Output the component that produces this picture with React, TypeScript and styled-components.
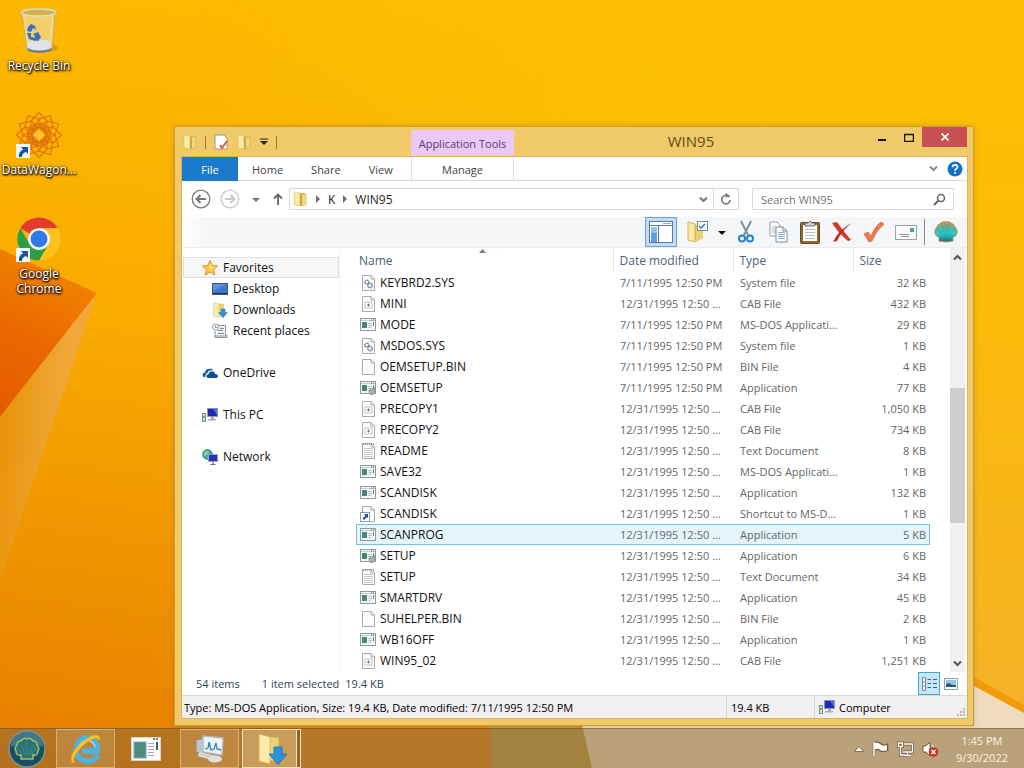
import React, { useState } from 'react';
import styled, { createGlobalStyle } from 'styled-components';

const GlobalStyle = createGlobalStyle`
  * {
    box-sizing: border-box;
  }

  body {
    margin: 0;
    font-family: 'Open Sans', 'Noto Sans', sans-serif;
    font-size: 11px;
    line-height: 15px;
    color: #1e1e1e;
  }

  button, input {
    font: inherit;
    color: inherit;
    margin: 0;
    padding: 0;
    border: 0;
    background: none;
  }

  a {
    color: inherit;
    text-decoration: none;
  }

  svg {
    display: block;
    flex: none;
  }
`;

const DesktopScreen = styled.div`
  position: relative;
  display: flex;
  flex-direction: column;
  min-height: 100vh;
  overflow: hidden;
  background: #f9b000;
`;

const WallpaperSvg = styled.svg`
  position: absolute;
  inset: 0;
  width: 100%;
  height: 100%;
`;

const DesktopArea = styled.main`
  flex: 1;
`;

const DesktopIcons = styled.nav`
  position: relative;
  display: flex;
  flex-direction: column;
  width: 78px;
  padding-top: 7px;
`;

const DesktopIcon = styled.a`
  display: flex;
  flex-direction: column;
  align-items: center;
  gap: 3px;
  min-height: 104px;
  font-size: 12px;
  color: #fff;
  text-align: center;
  text-shadow: 0 1px 2px #000, 1px 1px 2px #000, 0 0 3px rgba(0, 0, 0, 0.7);
`;

// Window frame

const WindowFrame = styled.section`
  position: absolute;
  left: 174px;
  right: 50px;
  top: 126px;
  bottom: 42px;
  display: flex;
  flex-direction: column;
  padding: 0 6px 7px 7px;
  background: #f0c969;
  border: 1px solid #cb9a3c;
  box-shadow: 0 0 4px rgba(120, 70, 0, 0.3);
`;

const TitleBar = styled.header`
  display: flex;
  height: 30px;
  flex: none;
`;

const QuickAccess = styled.div`
  display: flex;
  align-items: center;
  width: 229px;
  gap: 7px;
`;

const QuickButton = styled.button<{ $slim?: boolean }>`
  display: flex;
  width: ${props => props.$slim ? '10px' : '16px'};
  justify-content: center;
`;

const QuickDivider = styled.span`
  width: 1px;
  height: 13px;
  background: #a07a30;
`;

const ContextLabel = styled.div`
  display: flex;
  align-items: center;
  justify-content: center;
  width: 103px;
  margin-top: 3px;
  background: #ecc8f7;
  color: #5c3a6e;
`;

const WindowTitle = styled.h1`
  flex: 1;
  margin: 0;
  text-align: center;
  font-size: 15px;
  line-height: 29px;
  font-weight: 400;
  color: #65491a;
`;

const CaptionButtons = styled.div`
  display: flex;
  align-items: flex-start;
`;

const CaptionButton = styled.button<{ $close?: boolean }>`
  display: flex;
  align-items: center;
  justify-content: center;
  width: ${props => props.$close ? '45px' : '27px'};
  height: 20px;
  background: ${props => props.$close ? '#c75050' : 'transparent'};
`;

const Client = styled.div`
  flex: 1;
  min-height: 0;
  display: flex;
  flex-direction: column;
  background: #fff;
  box-shadow: 0 0 0 1px #dcb35a;
`;

const RibbonTabs = styled.div`
  display: flex;
  height: 24px;
  flex: none;
  border-bottom: 1px solid #dadbdc;
`;

const TabGroup = styled.div`
  display: flex;
  width: 229px;
`;

const RibbonTab = styled.button<{ $file?: boolean }>`
  padding: 0 14px;
  width: ${props => props.$file ? '56px' : 'auto'};
  height: 24px;
  background: ${props => props.$file ? '#1979ca' : 'transparent'};
  color: ${props => props.$file ? '#fff' : '#444'};
`;

const ContextTab = styled.button`
  width: 103px;
  height: 24px;
  border: solid #e3dbe6;
  border-width: 0 1px;
  color: #444;
`;

const RibbonEnd = styled.div`
  display: flex;
  flex: 1;
  align-items: center;
  justify-content: flex-end;
  gap: 9px;
  padding-right: 4px;
`;

const NavBar = styled.div`
  display: flex;
  align-items: center;
  gap: 1px;
  height: 36px;
  flex: none;
  padding: 0 13px 0 5px;
`;

const NavButton = styled.button<{ $narrow?: boolean }>`
  display: flex;
  align-items: center;
  justify-content: center;
  width: ${props => props.$narrow ? '21px' : '28px'};
  height: 24px;
`;

const AddressBar = styled.div`
  display: flex;
  flex: 1;
  align-items: center;
  height: 22px;
  margin-right: 12px;
  padding-left: 2px;
  border: 1px solid #d9d9d9;
  font-size: 12px;
`;

const Crumb = styled.button`
  padding: 0 8px;
`;

const CrumbArrow = styled.span`
  width: 0;
  height: 0;
  border: 4px solid transparent;
  border-left-color: #6d6d6d;
  border-right-width: 0;
  &:first-of-type {
    margin-left: 8px;
  }
`;

const AddressAction = styled.button<{ $line?: boolean }>`
  display: flex;
  align-items: center;
  justify-content: center;
  width: ${props => props.$line ? '25px' : '20px'};
  height: 20px;
  margin-left: ${props => props.$line ? '0' : 'auto'};
  border-left: ${props => props.$line ? '1px solid #d9d9d9' : '0'};
`;

const SearchBox = styled.label`
  display: flex;
  align-items: center;
  width: 202px;
  height: 22px;
  padding: 0 7px 0 8px;
  border: 1px solid #d9d9d9;
`;

const SearchInput = styled.input`
  flex: 1;
  min-width: 0;
  outline: none;
  font-size: 11px;
  &::placeholder {
    color: #757575;
    opacity: 1;
  }
`;

const Toolbar = styled.div`
  display: flex;
  align-items: center;
  justify-content: flex-end;
  height: 31px;
  flex: none;
  padding-right: 5px;
  background: linear-gradient(90deg, #fff, #f5f6f7 3%);
  border-bottom: 1px solid #ececec;
`;

const ToolButton = styled.button<{ $active?: boolean; $slim?: boolean }>`
  display: flex;
  align-items: center;
  justify-content: center;
  width: ${props => props.$slim ? '16px' : '32px'};
  height: 30px;
  margin-right: ${props => props.$active ? '5px' : '0'};
  border: ${props => props.$active ? '1px solid #6c9fd8' : '0'};
  background: ${props => props.$active ? '#c3dcf5' : 'transparent'};
`;

const ToolDivider = styled.span`
  width: 1px;
  height: 26px;
  margin: 0 5px 0 2px;
  background: #8a8a8a;
`;

// Navigation pane and file list

const Body = styled.div`
  display: flex;
  flex: 1;
  min-height: 0;
  overflow: hidden;
`;

const SideNav = styled.nav`
  width: 158px;
  flex: none;
  padding: 9px 0 0 1px;
  border-right: 1px solid #f5f5f5;
`;

const SideGroup = styled.div`
  margin-bottom: 21px;
`;

const SideLink = styled.a<{ $child?: boolean; $active?: boolean }>`
  display: flex;
  align-items: center;
  gap: 5px;
  height: 21px;
  padding-left: ${props => props.$child ? '28px' : '18px'};
  border: 1px solid ${props => props.$active ? '#dedede' : 'transparent'};
  background: ${props => props.$active ? '#f7f7f7' : 'transparent'};
  font-size: 12px;
  color: #111;
`;

const FilePane = styled.div`
  flex: 1;
  min-width: 0;
  overflow: hidden;
  padding: 0 20px 0 16px;
`;

const FileTable = styled.table`
  width: 100%;
  table-layout: fixed;
  border-collapse: collapse;
`;

const HeadCell = styled.th<{ $width?: number }>`
  position: relative;
  width: ${props => props.$width ? `${props.$width}px` : 'auto'};
  height: 24px;
  padding: 0 0 0 ${props => props.$width ? '6px' : '3px'};
  border-left: ${props => props.$width ? '1px solid #e5e5e5' : '0'};
  text-align: left;
  font-size: 12px;
  font-weight: 400;
  color: #4c607a;
`;

const SortMark = styled.svg`
  position: absolute;
  top: 1px;
  left: 48%;
`;

const FileRow = styled.tr<{ $selected?: boolean }>`
  height: 21px;
  background: ${props => props.$selected ? '#e5f3fb' : 'transparent'};
  outline: ${props => props.$selected ? '1px solid #7ac0e2' : 'none'};
  outline-offset: -1px;
`;

const Cell = styled.td<{ $right?: boolean }>`
  height: 21px;
  padding: 0 ${props => props.$right ? '4px' : '0'} 0 7px;
  color: #666;
  text-align: ${props => props.$right ? 'right' : 'left'};
  white-space: nowrap;
`;

const NameCell = styled(Cell)`
  padding-left: 4px;
`;

const FileName = styled.span`
  display: flex;
  align-items: center;
  gap: 4px;
  font-size: 12px;
  color: #111;
`;

const ScrollColumn = styled.div`
  display: grid;
  grid-template-rows: 18px 122fr 135fr 132fr 17px;
  width: 15px;
  margin-right: 2px;
  background: #f0f0f0;
`;

const ScrollArrow = styled.button<{ $row: number }>`
  grid-row: ${props => props.$row};
  display: flex;
  align-items: center;
  justify-content: center;
`;

const ScrollThumb = styled.div`
  grid-row: 3;
  background: #cdcdcd;
`;

const DetailsLine = styled.div`
  display: flex;
  align-items: center;
  height: 23px;
  flex: none;
  padding: 0 5px 0 14px;
  color: #33415c;
`;

const DetailsText = styled.span<{ $gap: number }>`
  margin-right: ${props => props.$gap}px;
`;

const ViewButtons = styled.div`
  display: flex;
  margin-left: auto;
`;

const ViewButton = styled.button<{ $active?: boolean }>`
  display: flex;
  align-items: center;
  justify-content: center;
  width: 22px;
  height: 23px;
  border: 1px solid ${props => props.$active ? '#4ba5cf' : 'transparent'};
  background: ${props => props.$active ? '#c4e8f8' : 'transparent'};
`;

const StatusBar = styled.footer`
  display: flex;
  height: 23px;
  flex: none;
  background: #f0f0f0;
  border-top: 1px solid #d9d9d9;
  color: #000;
`;

const StatusCell = styled.div<{ $width?: number }>`
  display: flex;
  align-items: center;
  gap: 4px;
  flex: ${props => props.$width ? `0 0 ${props.$width}px` : '1'};
  padding-left: ${props => props.$width ? '4px' : '2px'};
  border-left: ${props => props.$width ? '1px solid #d7d7d7' : '0'};
  white-space: nowrap;
`;

const Grip = styled.svg`
  align-self: flex-end;
  margin: 0 2px 2px auto;
`;

// Taskbar

const Taskbar = styled.footer`
  position: relative;
  display: flex;
  align-items: center;
  height: 40px;
  padding: 0 16px 0 8px;
  border-top: 1px solid rgba(110, 75, 20, 0.5);
  background: rgba(130, 102, 60, 0.5);
`;

const StartButton = styled.button`
  margin-right: 10px;
`;

const TaskButton = styled.button<{ $state?: 'open' | 'active' }>`
  display: flex;
  align-items: center;
  justify-content: center;
  width: 59px;
  height: 39px;
  margin-right: 3px;
  padding-right: ${props => props.$state ? '0' : '4px'};
  border: 1px solid ${props => props.$state === 'active' ? '#f5dfb4' : props.$state ? '#dcb274' : 'transparent'};
  background: ${props => props.$state === 'active' ? 'rgba(214, 180, 125, 0.6)' : props.$state ? 'rgba(206, 160, 104, 0.4)' : 'transparent'};
  box-shadow: ${props => props.$state === 'active' ? 'inset -4px 0 0 -1px #8d642c, inset -5px 0 0 -1px #f5dfb4' : 'none'};
`;

const Tray = styled.div`
  display: flex;
  align-items: center;
  gap: 8px;
  margin-left: auto;
`;

const TrayButton = styled.button``;

const Clock = styled.time`
  margin-left: 9px;
  line-height: 17px;
  text-align: center;
  color: #fff4de;
`;

// Icons

const Wallpaper: React.FC = () => (
  <WallpaperSvg viewBox="0 0 1024 768" preserveAspectRatio="none" aria-hidden="true">
    <defs>
      <linearGradient id="sky" x1="0.35" y1="0" x2="0.15" y2="1">
        <stop offset="0" stopColor="#fdbb00" />
        <stop offset="0.45" stopColor="#f9ab00" />
        <stop offset="1" stopColor="#e77f00" />
      </linearGradient>
      <linearGradient id="skyRight" x1="0" y1="0" x2="0" y2="1">
        <stop offset="0" stopColor="#fdc000" />
        <stop offset="0.4" stopColor="#fabb08" />
        <stop offset="1" stopColor="#f5b02c" />
      </linearGradient>
      <linearGradient id="fade" x1="0" y1="0" x2="1" y2="0">
        <stop offset="0" stopColor="#fff" stopOpacity="0" />
        <stop offset="0.55" stopColor="#fff" />
      </linearGradient>
      <mask id="rightMask">
        <rect x="200" width="824" height="768" fill="url(#fade)" />
      </mask>
      <linearGradient id="fold" x1="0.3" y1="0" x2="0" y2="1">
        <stop offset="0" stopColor="#f28200" />
        <stop offset="0.5" stopColor="#e96800" />
        <stop offset="1" stopColor="#e45a00" />
      </linearGradient>
      <linearGradient id="ray" x1="0" y1="0.5" x2="0.6" y2="0.65">
        <stop offset="0" stopColor="#e89408" />
        <stop offset="1" stopColor="#f0a83a" />
      </linearGradient>
    </defs>
    <rect width="1024" height="768" fill="url(#sky)" />
    <rect width="1024" height="768" fill="url(#skyRight)" mask="url(#rightMask)" />
    <path d="M0 249 L97 293 L0 417 Z" fill="url(#fold)" />
    <path d="M97 293 L0 417 V580 Z" fill="url(#ray)" />
    <path d="M200 724 H490 V768 H200 Z" fill="#e68a14" />
    <path d="M490 724 H582 L592 768 H490 Z" fill="#c59d40" />
    <path d="M582 724 L800 600 L974 682 L1024 712 V768 H592 Z" fill="#f0dcbc" />
    <path d="M974 677 L1024 705 V713 L974 686 Z" fill="#f09c08" />
  </WallpaperSvg>
);

const RecycleBin: React.FC = () => (
  <svg width="48" height="48" viewBox="0 0 48 48">
    <ellipse cx="32" cy="41" rx="11" ry="4" fill="#a06a00" opacity="0.35" />
    <path d="M7 6 L12 43 Q24 48 37 43 L40 6 Z" fill="#f3dc96" opacity="0.9" stroke="#b8ab8a" />
    <path d="M10 8 L14 36 Q24 40 34 36 L37 8 Z" fill="#f2c548" opacity="0.45" />
    <path d="M12 36 Q17 31 22 35 Q28 30 36 36 L35 42 Q24 46 13 42 Z" fill="#dfe3ec" />
    <path d="M12 41 Q24 46 37 41 L36 44 Q24 48 13 44 Z" fill="#7c7f78" />
    <ellipse cx="23.500" cy="5.500" rx="17" ry="3.500" fill="#d3b04a" stroke="#ddd9d0" strokeWidth="1.500" />
    <g fill="#396fc4">
      <path d="M13 20 L16 17 L20 19 L21 23 L18 21 L16 25 L12 24 Z" />
      <path d="M12 26 L16 26 L16 30 L21 31 L20 34 L14 32 Z" />
      <path d="M18 27 L23 25 L26 30 L23 34 L19 33 L20 29 Z" />
    </g>
  </svg>
);

const ShortcutArrow: React.FC = () => (
  <g transform="translate(1 33)">
    <rect width="14" height="14" fill="#f5f8fb" />
    <path d="M5 3 H12 V10 L10 8 Q6 9 6 13 L3 13 Q2 8 7 5.500 Z" fill="#1a559c" />
  </g>
);

const DataWagon: React.FC = () => (
  <svg width="48" height="48" viewBox="0 0 48 48">
    <g fill="none" stroke="#e0740f" strokeWidth="1.200" strokeLinejoin="round">
      {[0, 30, 60, 90, 120, 150, 180, 210, 240, 270, 300, 330].map(angle => (
        <path key={angle} transform={`rotate(${angle} 24 24)`} d="M20 14 L16 10 L24 1.500 L32 10 L20 18" />
      ))}
      {[15, 45, 75, 105, 135, 165].map(angle => (
        <ellipse key={angle} transform={`rotate(${angle} 24 24)`} cx="24" cy="24" rx="12" ry="6" />
      ))}
    </g>
    <path d="M24 17 L26 22 L31 24 L26 26 L24 31 L22 26 L17 24 L22 22 Z" fill="#ffc63c" />
    <ShortcutArrow />
  </svg>
);

const Chrome: React.FC = () => (
  <svg width="48" height="48" viewBox="0 0 48 48">
    <path d="M24 24 L5.400 13.200 A21.500 21.500 0 0 1 42.600 13.200 L24 13.200 Z" fill="#e33b2e" />
    <path d="M24 24 L24 13.200 H42.600 A21.500 21.500 0 0 1 24 45.500 L33.400 29.400 Z" fill="#fcc31e" />
    <path d="M24 24 L33.400 29.400 L24 45.500 A21.500 21.500 0 0 1 5.400 13.200 L14.700 29.400 Z" fill="#2b9f47" />
    <circle cx="24" cy="24" r="10.800" fill="#fff" />
    <circle cx="24" cy="24" r="8.500" fill="#3479ea" />
    <ShortcutArrow />
  </svg>
);

const FolderIcon: React.FC = () => (
  <svg width="16" height="16" viewBox="0 0 16 16">
    <path d="M7 2 H13 V14 H6 Z" fill="#e2bf55" />
    <path d="M9 3 H14 V14 L9 15 Z" fill="#f0d77e" stroke="#c9a544" strokeWidth="0.500" />
    <path d="M2 1 L8 2 V15 L2 14 Z" fill="#f9eaa6" stroke="#d4b454" strokeWidth="0.500" />
    <path d="M8 2 V15 L10 14 V4 Z" fill="#cfa63b" />
  </svg>
);

const CheckedPage: React.FC = () => (
  <svg width="16" height="16" viewBox="0 0 16 16">
    <path d="M2 1 H11 L14 4 V15 H2 Z" fill="#fdfdfd" stroke="#9a9a9a" />
    <path d="M7 11 L9 14 L14 7" fill="none" stroke="#e05c4c" strokeWidth="2" />
  </svg>
);

const DownChevron: React.FC<{ color?: string; up?: boolean }> = ({ color = '#555', up }) => (
  <svg width="9" height="7" viewBox="0 0 9 7">
    <path d={up ? 'M1 5.500 L4.500 2 L8 5.500' : 'M1 1.500 L4.500 5 L8 1.500'} fill="none" stroke={color} strokeWidth="2" />
  </svg>
);

const Caret: React.FC<{ bar?: boolean; color?: string }> = ({ bar, color = '#222' }) => (
  <svg width="8" height="8" viewBox="0 0 8 8">
    {bar && <path d="M0 1 H8" stroke={color} />}
    <path d="M0 3 H8 L4 7 Z" fill={color} />
  </svg>
);

const HelpIcon: React.FC = () => (
  <svg width="16" height="16" viewBox="0 0 16 16">
    <circle cx="8" cy="8" r="7.500" fill="#1271c8" />
    <path d="M5.500 6.200 Q5.500 3.800 8 3.800 Q10.500 3.800 10.500 6 Q10.500 7.300 9 8 Q8 8.500 8 9.800" fill="none" stroke="#fff" strokeWidth="1.700" />
    <rect x="7.100" y="11" width="1.800" height="1.800" fill="#fff" />
  </svg>
);

const RoundArrow: React.FC<{ color: string; forward?: boolean }> = ({ color, forward }) => (
  <svg width="20" height="20" viewBox="0 0 20 20">
    <circle cx="10" cy="10" r="8.800" fill="none" stroke={color} strokeWidth="1.300" />
    <path d={forward ? 'M5 10 H14 M10.500 6 L14.500 10 L10.500 14' : 'M15 10 H6 M9.500 6 L5.500 10 L9.500 14'} fill="none" stroke={color} strokeWidth="2" />
  </svg>
);

const UpArrow: React.FC = () => (
  <svg width="12" height="14" viewBox="0 0 12 14">
    <path d="M6 13 V3 M2 6.500 L6 2.500 L10 6.500" fill="none" stroke="#666" strokeWidth="1.800" />
  </svg>
);

const RefreshIcon: React.FC = () => (
  <svg width="12" height="12" viewBox="0 0 12 12">
    <path d="M9.500 4 A4.300 4.300 0 1 0 10.300 7" fill="none" stroke="#777" strokeWidth="1.600" />
    <path d="M5.500 0 L9.500 2.500 L5.500 5 Z" fill="#777" />
  </svg>
);

const SearchIcon: React.FC = () => (
  <svg width="13" height="13" viewBox="0 0 13 13">
    <circle cx="8" cy="5" r="3.500" fill="none" stroke="#666" strokeWidth="1.500" />
    <path d="M5.500 7.500 L1 12" stroke="#666" strokeWidth="2" />
  </svg>
);

const NavPaneIcon: React.FC = () => (
  <svg width="24" height="22" viewBox="0 0 24 22">
    <rect x="0.500" y="0.500" width="23" height="21" fill="#fff" stroke="#5d7a9c" />
    <path d="M1 4.500 H23" stroke="#5d7a9c" />
    <rect x="2" y="6" width="6" height="15" fill="#8cc2ef" />
    <rect x="2" y="12" width="6" height="9" fill="#5ba3e2" />
    <path d="M9.500 4 V21" stroke="#5d7a9c" />
    <path d="M14 2.500 H22" stroke="#8ea7c2" />
  </svg>
);

const FolderOptionsIcon: React.FC = () => (
  <svg width="22" height="24" viewBox="0 0 22 24">
    <path d="M6 5 H16 V18 L8 21 Z" fill="#dcb74e" />
    <path d="M1 2 L8 4 V22 L1 20 Z" fill="#f9e9a3" stroke="#d6b658" />
    <path d="M9 6 L16 5 V18 L9 22 Z" fill="#ecd073" />
    <rect x="10.500" y="1.500" width="10" height="9" fill="#f8fbfd" stroke="#7a8894" />
    <path d="M12 6 L14 8 L18 4" fill="none" stroke="#2c6dad" strokeWidth="1.300" />
  </svg>
);

const ScissorsIcon: React.FC = () => (
  <svg width="16" height="24" viewBox="0 0 16 24">
    <path d="M3 1 L10 15 M13 1 L6 15" stroke="#7d929f" strokeWidth="2" />
    <circle cx="4" cy="18.500" r="3" fill="none" stroke="#2684c6" strokeWidth="2" />
    <circle cx="12" cy="18.500" r="3" fill="none" stroke="#2684c6" strokeWidth="2" />
  </svg>
);

const CopyIcon: React.FC = () => (
  <svg width="19" height="22" viewBox="0 0 19 22">
    <path d="M1 1 H8 L11 4 V15 H1 Z" fill="#fff" stroke="#8e9aa5" />
    <path d="M3 6 H7 M3 8 H7 M3 10 H7 M3 12 H7" stroke="#a9bccb" />
    <path d="M7 6 H14 L18 10 V21 H7 Z" fill="#fff" stroke="#7f8d9a" />
    <path d="M14 6 V10 H18" fill="none" stroke="#7f8d9a" />
    <path d="M9 11.500 H16 M9 13.500 H16 M9 15.500 H16 M9 17.500 H16" stroke="#8fb2cf" />
  </svg>
);

const PasteIcon: React.FC = () => (
  <svg width="20" height="24" viewBox="0 0 20 24">
    <rect x="0.500" y="2.500" width="19" height="21" rx="1" fill="#94652a" stroke="#6b481d" />
    <path d="M3 5 H17 V21 H3 Z" fill="#fff" />
    <path d="M5 9.500 H15 M5 12.500 H15 M5 15.500 H15 M5 18.500 H15" stroke="#b4bfc9" />
    <path d="M5 3 H8 L10 1 L12 3 H15 V6 H5 Z" fill="#cfd3d5" stroke="#555" strokeWidth="0.800" />
  </svg>
);

const DeleteIcon: React.FC = () => (
  <svg width="22" height="22" viewBox="0 0 22 22">
    <path d="M1 2 L6 1 Q10 7 20 19 L17 20 Q8 13 1 2 Z" fill="#d03b2a" />
    <path d="M21 2 Q11 9 6 20 L2 21 Q8 8 21 2 Z" fill="#c02f22" />
  </svg>
);

const TickIcon: React.FC = () => (
  <svg width="22" height="22" viewBox="0 0 22 22">
    <path d="M1 13 L5 11 L8 15 Q13 4 18 1 L21 3 Q13 10 9 20 L6 21 Z" fill="#ee7a4c" stroke="#d8653b" strokeWidth="0.700" />
  </svg>
);

const MailIcon: React.FC = () => (
  <svg width="22" height="15" viewBox="0 0 22 15">
    <rect x="0.500" y="0.500" width="21" height="14" fill="#fbfbfb" stroke="#9aa3aa" />
    <rect x="15" y="3" width="4" height="4" fill="#43a996" />
    <path d="M4 9.500 H14 M6 11.500 H14" stroke="#8a9199" />
  </svg>
);

const ShellIcon: React.FC = () => (
  <svg width="24" height="22" viewBox="0 0 24 22">
    <defs>
      <linearGradient id="shell" x1="0" y1="0" x2="0" y2="1">
        <stop offset="0" stopColor="#d98a4c" />
        <stop offset="0.350" stopColor="#4fb9a8" />
        <stop offset="0.600" stopColor="#28cbd2" />
        <stop offset="1" stopColor="#0f6e72" />
      </linearGradient>
    </defs>
    <path d="M12 1 Q15 0 17 2 Q20 3 21 6 Q24 9 23 12 Q23 15 19 16 V20 Q12 22 5 20 V16 Q1 15 1 12 Q0 9 3 6 Q4 3 7 2 Q9 0 12 1 Z" fill="url(#shell)" stroke="#bb8c55" />
    <path d="M12 15 V3 M11 15 L8 4 M13 15 L16 4 M9 15 L4 8 M15 15 L20 8" stroke="#2a9c9c" strokeWidth="0.500" />
  </svg>
);

const StarIcon: React.FC = () => (
  <svg width="16" height="16" viewBox="0 0 16 16">
    <path d="M8 0.500 L10.200 5.500 L15.500 6 L11.500 9.500 L12.800 15 L8 12 L3.200 15 L4.500 9.500 L0.500 6 L5.800 5.500 Z" fill="#fdcb3c" stroke="#df8a35" />
    <path d="M8 3 L9.300 6.500 L12.500 7 L8 9 Z" fill="#fff0a4" />
  </svg>
);

const MonitorIcon: React.FC = () => (
  <svg width="16" height="16" viewBox="0 0 16 16">
    <rect x="0.500" y="2.500" width="15" height="11" fill="#3f77d0" stroke="#45566e" />
    <path d="M1 3 H15 L1 10 Z" fill="#6fa0e6" opacity="0.600" />
    <path d="M1 12.500 H15" stroke="#1e3352" />
  </svg>
);

const DownloadsIcon: React.FC<{ size?: number }> = ({ size = 16 }) => (
  <svg width={size} height={size} viewBox="0 0 16 16">
    <path d="M6 2 H11.500 V14 H6 Z" fill="#ecd278" stroke="#c8a546" strokeWidth="0.400" />
    <path d="M1.500 0.500 L7 2 V15.500 L1.500 14 Z" fill="#faebad" stroke="#d4b454" strokeWidth="0.400" />
    <path d="M9 7 H13 V10.500 H15.500 L11 15.800 L6.500 10.500 H9 Z" fill="#2b93dc" stroke="#1b6fae" strokeWidth="0.400" />
  </svg>
);

const RecentIcon: React.FC = () => (
  <svg width="16" height="16" viewBox="0 0 16 16">
    <path d="M5 2.500 H13.500 V12 H15 V14.500 H3 V8" fill="#f1f3f5" stroke="#8f969e" />
    <path d="M3 13 H15" stroke="#8f969e" />
    <path d="M8 5.500 H12 M6 7.500 H11 M6 10.500 H12" stroke="#7d8995" />
    <circle cx="3.500" cy="4" r="3" fill="#fff" stroke="#8f969e" />
    <path d="M3.500 2.500 V4.500 H5" fill="none" stroke="#666" strokeWidth="0.800" />
  </svg>
);

const CloudIcon: React.FC = () => (
  <svg width="16" height="16" viewBox="0 0 16 16">
    <path d="M1.500 12 Q-1 8 3 7.500 Q3.500 3.500 7.500 4 Q9.500 2.500 11 5 Q6 5 5.500 8 Q3 8.500 3.500 12 Z" fill="#1359a8" />
    <path d="M5.500 13 Q3 10 6.500 9 Q7.500 5.500 10.500 6.500 Q13 6.500 13 9 Q16 9 16 11.500 Q15.500 13 14 13 Z" fill="#0d4f9f" />
  </svg>
);

const ComputerIcon: React.FC<{ network?: boolean }> = ({ network }) => (
  <svg width="16" height="16" viewBox="0 0 16 16">
    {network ? (
      <>
        <circle cx="5.500" cy="5.500" r="5" fill="#39a4bd" stroke="#2d6f90" strokeWidth="0.600" />
        <path d="M2 3 Q5 1 7 3 L5 6 L2 7 Z M5 8 L8 7 L7 10 Z" fill="#8fd47a" />
        <rect x="6.500" y="5.500" width="9" height="7" fill="#2231b8" stroke="#9aa5b8" />
        <path d="M11 13 V15 M8.500 15.500 H13.500" stroke="#68717c" strokeWidth="1.200" />
      </>
    ) : (
      <>
        <rect x="0.500" y="6.500" width="3" height="8" fill="#d3dbd5" stroke="#7f8b84" />
        <rect x="1" y="9" width="1.500" height="2" fill="#4fae55" />
        <rect x="5.500" y="1.500" width="10" height="8" fill="#1d29b5" stroke="#8d98aa" />
        <path d="M11 2 H15 V8 Z" fill="#5566e6" />
        <path d="M9 10 H12 V12 H14 V13.500 H6 V12 H9 Z" fill="#a4acb6" />
      </>
    )}
  </svg>
);

type FileKind = 'sys' | 'cab' | 'app' | 'bin' | 'setup' | 'text' | 'link';

const AppWindowArt: React.FC = () => (
  <>
    <rect x="0.500" y="1.500" width="15" height="12" fill="#f2f6f6" stroke="#8f9ba1" />
    <path d="M1 3.500 H15" stroke="#c3cdd1" />
    <path d="M11 3 H12 M13 3 H14" stroke="#556" />
    <rect x="2" y="5" width="5" height="6" fill="#468676" />
    <path d="M8.500 6.500 H12 M8.500 8.500 H12 M8.500 10.500 H11" stroke="#b3bfc5" />
    <path d="M13.500 5 V9" stroke="#72858c" />
  </>
);

const FileIcon: React.FC<{ kind: FileKind }> = ({ kind }) => (
  <svg width="16" height="16" viewBox="0 0 16 16">
    {kind === 'app' || kind === 'setup' ? (
      <AppWindowArt />
    ) : (
      <path d="M2.500 0.500 H11 L14.500 4 V15.500 H2.500 Z M11 0.500 V4 H14.500" fill="#fdfdfd" stroke="#a0a0a0" strokeWidth="0.900" />
    )}
    {kind === 'setup' && (
      <path d="M9 12 Q9 8 12 9 L15 7 V12 Q14 15 11 15 Z" fill="#a4b3a9" stroke="#6f8277" strokeWidth="0.600" />
    )}
    {kind === 'sys' && (
      <g fill="none" stroke="#53718c" strokeWidth="1.400">
        <circle cx="6.800" cy="7" r="1.900" strokeDasharray="1.200 0.500" />
        <circle cx="10" cy="10.500" r="2.200" strokeDasharray="1.200 0.500" />
      </g>
    )}
    {kind === 'cab' && (
      <>
        <rect x="5" y="6" width="7" height="6" fill="none" stroke="#b5b5b5" strokeWidth="0.800" />
        <path d="M7 9 H10 M8.500 7.500 V10.500" stroke="#777" />
      </>
    )}
    {kind === 'text' && (
      <>
        <path d="M4 5.500 H13 M4 7.500 H13 M4 9.500 H13 M4 11.500 H13 M4 13.500 H13" stroke="#c8c8c8" />
        <path d="M3 1 H14" stroke="#999" strokeWidth="2" strokeDasharray="1 1" />
      </>
    )}
    {kind === 'link' && (
      <>
        <rect x="0.500" y="6.500" width="9" height="9" fill="#fff" stroke="#849eb7" />
        <path d="M4 8 H8 V12 L7 11 L4 14 L2.500 12.500 L5.500 9.500 Z" fill="#17549b" />
      </>
    )}
  </svg>
);

const StartOrb: React.FC = () => (
  <svg width="38" height="38" viewBox="0 0 38 38">
    <circle cx="19" cy="19" r="18" fill="#174e61" stroke="#819394" strokeWidth="1.500" />
    <path d="M3 17 A16 16 0 0 1 35 17 Q19 10 3 17 Z" fill="#5a94a0" opacity="0.600" />
    <path d="M13 29 V25 Q8 26 8 21 Q6 18 9 15 Q9 11 13 11 Q16 7 19 9 Q22 7 25 11 Q29 11 29 15 Q32 18 30 21 Q30 26 25 25 V29 Z" fill="#2a7275" stroke="#a7bd66" strokeWidth="1.500" />
    <path d="M19 25 V12 M17 25 L13 14 M21 25 L25 14 M15 25 L10 18 M23 25 L28 18" stroke="#4a8f86" strokeWidth="0.800" />
  </svg>
);

const ExplorerIcon: React.FC = () => (
  <svg width="34" height="32" viewBox="0 0 34 32">
    <path d="M29 22 Q25 29 17 28 Q6 26 7 16 Q9 5 18 5 Q29 6 28 18 H13" fill="none" stroke="#4cb4e2" strokeWidth="5.500" />
    <path d="M10 17 Q10 8 18 7.500 Q25 8 26 14" fill="none" stroke="#a3e0f7" strokeWidth="1.500" />
    <path d="M3 30 Q-1 22 12 10 Q25 -1 30 3 Q32 5 30 8 Q29 4 24 6 Q14 10 7 21 Q3 28 6 29 Z" fill="#fbc525" stroke="#dd9b13" strokeWidth="0.600" />
  </svg>
);

const ProgramIcon: React.FC = () => (
  <svg width="30" height="26" viewBox="0 0 30 26">
    <rect x="0.500" y="1.500" width="29" height="23" fill="#fafafa" stroke="#d5d5cf" />
    <path d="M22 3 H24 M25 3 H27" stroke="#555" strokeWidth="1.500" />
    <rect x="3" y="6" width="12" height="16" fill="#4a8f7c" stroke="#7da8bf" />
    <path d="M17 7.500 H23 M17 10.500 H23 M17 13.500 H23 M17 16.500 H23 M17 19.500 H23" stroke="#a9a9a9" />
    <path d="M26 6 V14" stroke="#41665e" strokeWidth="2" />
  </svg>
);

const TaskManagerIcon: React.FC = () => (
  <svg width="30" height="30" viewBox="0 0 30 30">
    <path d="M1 6 L10 4 V21 L1 18 Z" fill="#bfc5c3" stroke="#868b88" />
    <path d="M8 2 L28 4 L27 21 L8 18 Z" fill="#eef5f8" stroke="#b5bdc1" strokeWidth="1.500" />
    <path d="M10 15 L13 14 L14 8 L16 16 L19 15 L21 9 L22 15 L26 16" fill="none" stroke="#2d85b2" strokeWidth="1.300" />
    <path d="M4 19 L20 23 M3 21 L17 25" stroke="#dedede" strokeWidth="2" />
    <ellipse cx="20" cy="25" rx="7" ry="3.500" fill="#dfe1e1" />
  </svg>
);

const FlagIcon: React.FC = () => (
  <svg width="17" height="16" viewBox="0 0 17 16">
    <path d="M2 1 V15 M2.500 2 Q6 1 8 3 Q11 6 15 4 V9 Q11 11 8 9 Q6 7 2.500 8.500 Z" fill="#fff" stroke="#6e5a38" strokeWidth="2.500" />
    <path d="M2 1 V15 M2.500 2 Q6 1 8 3 Q11 6 15 4 V9 Q11 11 8 9 Q6 7 2.500 8.500 Z" fill="#fff" />
    <path d="M2 1 V15" stroke="#fff" strokeWidth="1.500" />
  </svg>
);

const NetworkTrayIcon: React.FC = () => (
  <svg width="17" height="16" viewBox="0 0 17 16">
    <g fill="none">
      <path d="M7 3 H15.500 V11 H6 M10.500 11 V14 M7 14.500 H14 M3.500 5 V14 H8 M1.500 2 H5.500 V5.500 H1.500 Z" stroke="#6e5a38" strokeWidth="3" />
      <path d="M7 3 H15.500 V11 H6 M10.500 11 V14 M7 14.500 H14 M3.500 5 V14 H8 M1.500 2 H5.500 V5.500 H1.500 Z" stroke="#fff" strokeWidth="1.400" />
    </g>
  </svg>
);

const MutedIcon: React.FC = () => (
  <svg width="17" height="16" viewBox="0 0 17 16">
    <path d="M1 5 H4 L8 1 V15 L4 11 H1 Z" fill="#fff" stroke="#6e5a38" />
    <path d="M10 4 Q12 5 12 8" fill="none" stroke="#fff" />
    <circle cx="11.500" cy="11" r="4.800" fill="#d02f26" />
    <path d="M9.500 9 L13.500 13 M13.500 9 L9.500 13" stroke="#fff" strokeWidth="1.600" />
  </svg>
);

interface FileEntry {
  name: string;
  date: string;
  type: string;
  size: string;
  kind: FileKind;
}

const JULY = '7/11/1995 12:50 PM';
const DECEMBER = '12/31/1995 12:50 ...';

const files: FileEntry[] = [
  { name: 'KEYBRD2.SYS', date: JULY, type: 'System file', size: '32 KB', kind: 'sys' },
  { name: 'MINI', date: DECEMBER, type: 'CAB File', size: '432 KB', kind: 'cab' },
  { name: 'MODE', date: JULY, type: 'MS-DOS Applicati...', size: '29 KB', kind: 'app' },
  { name: 'MSDOS.SYS', date: JULY, type: 'System file', size: '1 KB', kind: 'sys' },
  { name: 'OEMSETUP.BIN', date: JULY, type: 'BIN File', size: '4 KB', kind: 'bin' },
  { name: 'OEMSETUP', date: JULY, type: 'Application', size: '77 KB', kind: 'setup' },
  { name: 'PRECOPY1', date: DECEMBER, type: 'CAB File', size: '1,050 KB', kind: 'cab' },
  { name: 'PRECOPY2', date: DECEMBER, type: 'CAB File', size: '734 KB', kind: 'cab' },
  { name: 'README', date: DECEMBER, type: 'Text Document', size: '8 KB', kind: 'text' },
  { name: 'SAVE32', date: DECEMBER, type: 'MS-DOS Applicati...', size: '1 KB', kind: 'app' },
  { name: 'SCANDISK', date: DECEMBER, type: 'Application', size: '132 KB', kind: 'app' },
  { name: 'SCANDISK', date: DECEMBER, type: 'Shortcut to MS-D...', size: '1 KB', kind: 'link' },
  { name: 'SCANPROG', date: DECEMBER, type: 'Application', size: '5 KB', kind: 'app' },
  { name: 'SETUP', date: DECEMBER, type: 'Application', size: '6 KB', kind: 'setup' },
  { name: 'SETUP', date: DECEMBER, type: 'Text Document', size: '34 KB', kind: 'text' },
  { name: 'SMARTDRV', date: DECEMBER, type: 'Application', size: '45 KB', kind: 'app' },
  { name: 'SUHELPER.BIN', date: DECEMBER, type: 'BIN File', size: '2 KB', kind: 'bin' },
  { name: 'WB16OFF', date: DECEMBER, type: 'Application', size: '1 KB', kind: 'app' },
  { name: 'WIN95_02', date: DECEMBER, type: 'CAB File', size: '1,251 KB', kind: 'cab' },
];

const tools = [
  { label: 'Cut', icon: <ScissorsIcon /> },
  { label: 'Copy', icon: <CopyIcon /> },
  { label: 'Paste', icon: <PasteIcon /> },
  { label: 'Delete', icon: <DeleteIcon /> },
  { label: 'Properties', icon: <TickIcon /> },
  { label: 'E-mail', icon: <MailIcon /> },
];

const FileList: React.FC = () => {
  const [selected, setSelected] = useState(12);

  return (
    <FilePane>
      <FileTable>
        <thead>
          <tr>
            <HeadCell>
              Name
              <SortMark width="7" height="4" viewBox="0 0 7 4"><path d="M0 4 L3.500 0 L7 4 Z" fill="#6b7f96" /></SortMark>
            </HeadCell>
            <HeadCell $width={120}>Date modified</HeadCell>
            <HeadCell $width={120}>Type</HeadCell>
            <HeadCell $width={77}>Size</HeadCell>
          </tr>
        </thead>
        <tbody>
          {files.map((file, index) => (
            <FileRow key={index} $selected={index === selected} onClick={() => setSelected(index)}>
              <NameCell>
                <FileName><FileIcon kind={file.kind} />{file.name}</FileName>
              </NameCell>
              <Cell>{file.date}</Cell>
              <Cell>{file.type}</Cell>
              <Cell $right>{file.size}</Cell>
            </FileRow>
          ))}
        </tbody>
      </FileTable>
    </FilePane>
  );
};

const ExplorerWindow: React.FC = () => (
  <WindowFrame>
    <TitleBar>
      <QuickAccess>
        <QuickButton aria-label="Window menu"><FolderIcon /></QuickButton>
        <QuickDivider />
        <QuickButton aria-label="Properties"><CheckedPage /></QuickButton>
        <QuickButton aria-label="New folder"><FolderIcon /></QuickButton>
        <QuickButton $slim aria-label="Customize toolbar"><Caret bar /></QuickButton>
        <QuickDivider />
      </QuickAccess>
      <ContextLabel>Application Tools</ContextLabel>
      <WindowTitle>WIN95</WindowTitle>
      <CaptionButtons>
        <CaptionButton aria-label="Minimize">
          <svg width="10" height="10" viewBox="0 0 10 10"><path d="M1 8 H9" stroke="#1b1408" strokeWidth="2" /></svg>
        </CaptionButton>
        <CaptionButton aria-label="Maximize">
          <svg width="10" height="9" viewBox="0 0 10 9"><path d="M0 1.500 H10 M0.500 1 V8.500 H9.500 V1" fill="none" stroke="#1b1408" strokeWidth="1.500" /></svg>
        </CaptionButton>
        <CaptionButton $close aria-label="Close">
          <svg width="8" height="8" viewBox="0 0 8 8"><path d="M0.500 0.500 L7.500 7.500 M7.500 0.500 L0.500 7.500" stroke="#fff" strokeWidth="1.700" /></svg>
        </CaptionButton>
      </CaptionButtons>
    </TitleBar>

    <Client>
      <RibbonTabs>
        <TabGroup>
          <RibbonTab $file>File</RibbonTab>
          <RibbonTab>Home</RibbonTab>
          <RibbonTab>Share</RibbonTab>
          <RibbonTab>View</RibbonTab>
        </TabGroup>
        <ContextTab>Manage</ContextTab>
        <RibbonEnd>
          <button aria-label="Expand ribbon"><DownChevron color="#8a8a8a" /></button>
          <button aria-label="Help"><HelpIcon /></button>
        </RibbonEnd>
      </RibbonTabs>

      <NavBar>
        <NavButton aria-label="Back"><RoundArrow color="#777" /></NavButton>
        <NavButton aria-label="Forward"><RoundArrow color="#cacaca" forward /></NavButton>
        <NavButton $narrow aria-label="Recent locations"><Caret color="#777" /></NavButton>
        <NavButton $narrow aria-label="Up"><UpArrow /></NavButton>
        <AddressBar>
          <FolderIcon />
          <CrumbArrow />
          <Crumb>K</Crumb>
          <CrumbArrow />
          <Crumb>WIN95</Crumb>
          <AddressAction aria-label="Previous locations"><DownChevron color="#777" /></AddressAction>
          <AddressAction $line aria-label="Refresh"><RefreshIcon /></AddressAction>
        </AddressBar>
        <SearchBox>
          <SearchInput type="text" placeholder="Search WIN95" aria-label="Search WIN95" />
          <SearchIcon />
        </SearchBox>
      </NavBar>

      <Toolbar>
        <ToolButton $active aria-label="Navigation pane"><NavPaneIcon /></ToolButton>
        <ToolButton aria-label="Folder options"><FolderOptionsIcon /></ToolButton>
        <ToolButton $slim aria-label="More options"><Caret color="#111" /></ToolButton>
        {tools.map(tool => (
          <ToolButton key={tool.label} aria-label={tool.label}>{tool.icon}</ToolButton>
        ))}
        <ToolDivider />
        <ToolButton aria-label="Classic settings"><ShellIcon /></ToolButton>
      </Toolbar>

      <Body>
        <SideNav>
          <SideGroup>
            <SideLink href="#favorites" $active><StarIcon />Favorites</SideLink>
            <SideLink href="#desktop" $child><MonitorIcon />Desktop</SideLink>
            <SideLink href="#downloads" $child><DownloadsIcon />Downloads</SideLink>
            <SideLink href="#recent" $child><RecentIcon />Recent places</SideLink>
          </SideGroup>
          <SideGroup>
            <SideLink href="#onedrive"><CloudIcon />OneDrive</SideLink>
          </SideGroup>
          <SideGroup>
            <SideLink href="#thispc"><ComputerIcon />This PC</SideLink>
          </SideGroup>
          <SideGroup>
            <SideLink href="#network"><ComputerIcon network />Network</SideLink>
          </SideGroup>
        </SideNav>
        <FileList />
        <ScrollColumn>
          <ScrollArrow $row={1} aria-label="Scroll up"><DownChevron up /></ScrollArrow>
          <ScrollThumb />
          <ScrollArrow $row={5} aria-label="Scroll down"><DownChevron /></ScrollArrow>
        </ScrollColumn>
      </Body>

      <DetailsLine>
        <DetailsText $gap={22}>54 items</DetailsText>
        <DetailsText $gap={6}>1 item selected</DetailsText>
        <DetailsText $gap={0}>19.4 KB</DetailsText>
        <ViewButtons>
          <ViewButton $active aria-label="Details view">
            <svg width="16" height="14" viewBox="0 0 16 14">
              <path d="M1.500 0.500 H4.500 V13.500 H1.500 Z M1 5 H5 M1 9 H5" fill="#fff" stroke="#7a8a94" />
              <path d="M6.500 2.500 H10 M12 2.500 H16 M6.500 6.500 H10 M12 6.500 H16 M6.500 10.500 H10 M12 10.500 H16" stroke="#41618a" />
            </svg>
          </ViewButton>
          <ViewButton aria-label="Large icons view">
            <svg width="14" height="12" viewBox="0 0 14 12">
              <rect x="0.500" y="0.500" width="13" height="11" fill="#fff" stroke="#8fa0ad" />
              <rect x="2" y="2" width="10" height="7" fill="#8fc6e4" />
              <path d="M2 6 Q5 4 8 7 H12 V9 H2 Z" fill="#245d68" />
            </svg>
          </ViewButton>
        </ViewButtons>
      </DetailsLine>

      <StatusBar>
        <StatusCell>Type: MS-DOS Application, Size: 19.4 KB, Date modified: 7/11/1995 12:50 PM</StatusCell>
        <StatusCell $width={88}>19.4 KB</StatusCell>
        <StatusCell $width={153}>
          <ComputerIcon />
          Computer
          <Grip width="8" height="8" viewBox="0 0 8 8">
            <path d="M6 0 H8 V2 H6 Z M3 3 H5 V5 H3 Z M6 3 H8 V5 H6 Z M0 6 H2 V8 H0 Z M3 6 H5 V8 H3 Z M6 6 H8 V8 H6 Z" fill="#b9b9b9" />
          </Grip>
        </StatusCell>
      </StatusBar>
    </Client>
  </WindowFrame>
);

const App: React.FC = () => (
  <DesktopScreen>
    <GlobalStyle />
    <Wallpaper />
    <DesktopArea>
      <DesktopIcons>
        <DesktopIcon href="#recycle"><RecycleBin />Recycle Bin</DesktopIcon>
        <DesktopIcon href="#datawagon"><DataWagon />DataWagon...</DesktopIcon>
        <DesktopIcon href="#chrome"><Chrome /><span>Google<br />Chrome</span></DesktopIcon>
      </DesktopIcons>
      <ExplorerWindow />
    </DesktopArea>
    <Taskbar>
      <StartButton aria-label="Start"><StartOrb /></StartButton>
      <TaskButton $state="open" aria-label="Internet Explorer"><ExplorerIcon /></TaskButton>
      <TaskButton aria-label="Program"><ProgramIcon /></TaskButton>
      <TaskButton $state="open" aria-label="Task Manager"><TaskManagerIcon /></TaskButton>
      <TaskButton $state="active" aria-label="File Explorer"><DownloadsIcon size={32} /></TaskButton>
      <Tray>
        <TrayButton aria-label="Show hidden icons">
          <svg width="10" height="6" viewBox="0 0 10 6"><path d="M0.500 5.500 L5 0.500 L9.500 5.500 Z" fill="#fff" stroke="#8b744c" /></svg>
        </TrayButton>
        <TrayButton aria-label="Action center"><FlagIcon /></TrayButton>
        <TrayButton aria-label="Network"><NetworkTrayIcon /></TrayButton>
        <TrayButton aria-label="Volume"><MutedIcon /></TrayButton>
        <Clock>1:45 PM<br />9/30/2022</Clock>
      </Tray>
    </Taskbar>
  </DesktopScreen>
);

export default App;
